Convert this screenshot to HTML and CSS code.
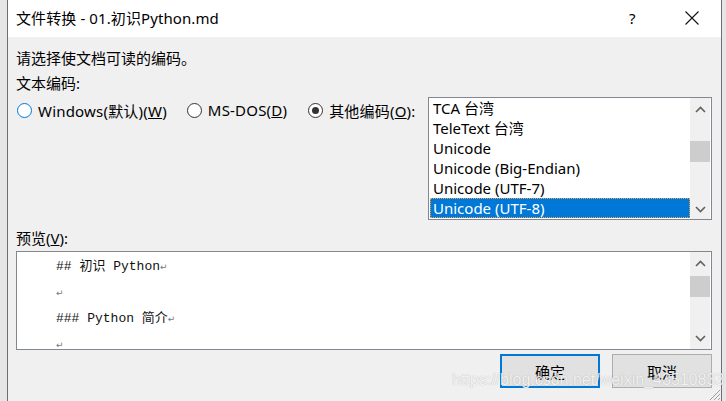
FILE: index.html
```html
<!DOCTYPE html>
<html lang="zh-CN">
<head>
<meta charset="utf-8">
<title>文件转换</title>
<link rel="stylesheet" href="styles.css">
</head>
<body>
<div class="dialog">
  <div class="titlebar">
    <span class="title">文件转换 - 01.初识Python.md</span>
    <span class="help">?</span>
    <svg class="close" width="14" height="14" viewBox="0 0 14 14"><path d="M0.5 0.5 L13.5 13.5 M13.5 0.5 L0.5 13.5" stroke="#111" stroke-width="1.1" fill="none"/></svg>
  </div>
  <div class="content">
    <div class="line">请选择使文档可读的编码。</div>
    <div class="line">文本编码:</div>
    <div class="encrow">
      <div class="radios">
        <label class="radio"><span class="circle focus"></span><span>Windows(默认)(<u>W</u>)</span></label>
        <label class="radio"><span class="circle"></span><span>MS-DOS(<u>D</u>)</span></label>
        <label class="radio"><span class="circle checked"></span><span>其他编码(<u>O</u>):</span></label>
      </div>
      <div class="listbox">
        <ul class="items">
          <li>TCA 台湾</li>
          <li>TeleText 台湾</li>
          <li>Unicode</li>
          <li>Unicode (Big-Endian)</li>
          <li>Unicode (UTF-7)</li>
          <li class="sel">Unicode (UTF-8)</li>
        </ul>
        <div class="vscroll">
          <svg class="arrow" width="11" height="7" viewBox="0 0 11 7"><path d="M1 6 L5.5 1.5 L10 6" stroke="#606060" stroke-width="1.6" fill="none"/></svg>
          <div class="track lb"><div class="thumb lbthumb"></div></div>
          <svg class="arrow" width="11" height="7" viewBox="0 0 11 7"><path d="M1 1 L5.5 5.5 L10 1" stroke="#606060" stroke-width="1.6" fill="none"/></svg>
        </div>
      </div>
    </div>
    <div class="line preview-label">预览(<u>V</u>):</div>
    <div class="preview">
      <div class="ptext">
        <div class="pline">## 初识 Python<span class="ret">↵</span></div>
        <div class="pline"><span class="ret">↵</span></div>
        <div class="pline">### Python 简介<span class="ret">↵</span></div>
        <div class="pline"><span class="ret">↵</span></div>
      </div>
      <div class="vscroll pv">
        <svg class="arrow" width="11" height="7" viewBox="0 0 11 7"><path d="M1 6 L5.5 1.5 L10 6" stroke="#606060" stroke-width="1.6" fill="none"/></svg>
        <div class="track pvtrack"><div class="thumb pvthumb"></div></div>
        <svg class="arrow" width="11" height="7" viewBox="0 0 11 7"><path d="M1 1 L5.5 5.5 L10 1" stroke="#606060" stroke-width="1.6" fill="none"/></svg>
      </div>
    </div>
    <div class="buttons">
      <button class="btn default">确定</button>
      <button class="btn">取消</button>
    </div>
  </div>
  <div class="watermark">https://blog.csdn.net/weixin_43510833</div>
  <svg class="grip" width="14" height="14" viewBox="0 0 14 14"><path d="M13 3 L3 13 M13 7 L7 13 M13 11 L11 13" stroke="#a0a0a0" stroke-width="1" fill="none"/></svg>
</div>
</body>
</html>
```
FILE: styles.css
```css
html, body {
  margin: 0;
  padding: 0;
  height: 100%;
  overflow: hidden;
}
body {
  background: #e6e6e6;
  font-family: "Segoe UI", "Noto Sans", "Noto Sans CJK SC", sans-serif;
  font-size: 15px;
  color: #000;
}
.dialog {
  position: relative;
  margin-left: 7px;
  width: 713px;
  height: 401px;
  border-left: 1px solid #6e6e6e;
  border-right: 1px solid #6e6e6e;
  background: #f0f0f0;
}
.titlebar {
  height: 37px;
  background: #fff;
  display: flex;
  align-items: center;
  padding-left: 8px;
}
.title {
  flex: 1;
  line-height: 20px;
  margin-top: -2px;
  letter-spacing: 0.1px;
}
.help {
  width: 10px;
  font-size: 15px;
  margin-right: 46px;
  margin-top: -2px;
}
.close {
  margin-right: 22px;
  margin-top: -2px;
}
.content {
  padding: 9px 8px 0 8px;
}
.line {
  height: 25px;
  line-height: 25px;
  white-space: nowrap;
}
.encrow {
  display: flex;
  margin-top: 1px;
}
.radios {
  width: 412px;
  display: flex;
  height: 26px;
  align-items: center;
  white-space: nowrap;
}
.radio {
  display: flex;
  align-items: center;
  gap: 6px;
  margin-right: 20px;
  letter-spacing: 0.2px;
}
.radio:first-child { padding-left: 1px; }
.radio:nth-child(2) { margin-right: 21px; }
.circle {
  width: 13px;
  height: 13px;
  border: 1px solid #333;
  border-radius: 50%;
  background: #fff;
  display: flex;
  align-items: center;
  justify-content: center;
}
.circle.focus { border-color: #0078d7; }
.circle.checked::after {
  content: "";
  width: 7px;
  height: 7px;
  border-radius: 50%;
  background: #333;
}
.listbox {
  width: 282px;
  height: 121px;
  border: 1px solid #828790;
  background: #fff;
  display: flex;
  margin-left: 0;
}
.items {
  list-style: none;
  margin: 0;
  padding: 0 0 0 1px;
  flex: 1;
}
.items li {
  height: 20px;
  line-height: 21px;
  padding-left: 3px;
  white-space: nowrap;
}
.items li.sel {
  background: #0078d7;
  color: #fff;
  outline: 1px dotted #f3a04a;
  outline-offset: -1px;
}
.vscroll {
  width: 20px;
  background: #f0f0f0;
  display: flex;
  flex-direction: column;
  align-items: center;
  padding: 8px 0 6px;
  box-sizing: border-box;
  margin-right: 1px;
}
.arrow { flex: none; }
.track {
  flex: 1;
  width: 20px;
  position: relative;
}
.thumb {
  position: absolute;
  left: 0;
  width: 20px;
  background: #cdcdcd;
}
.lbthumb { top: 28px; height: 21px; }
.preview-label {
  margin-top: 6px;
}
.preview {
  height: 97px;
  border: 1px solid #828790;
  background: #fff;
  display: flex;
  width: 694px;
}
.ptext {
  flex: 1;
  padding: 4px 0 0 39px;
  font-family: "Liberation Mono", "Noto Sans CJK SC", monospace;
  font-size: 13px;
  color: #111;
  overflow: hidden;
}
.pline {
  height: 26px;
  line-height: 22px;
  white-space: pre;
}
.ret {
  font-family: "DejaVu Sans", sans-serif;
  font-size: 9px;
  color: #777;
}
.pv { padding-top: 8px; padding-bottom: 7px; }
.pvthumb { top: 9px; height: 21px; }
.buttons {
  display: flex;
  justify-content: flex-end;
  gap: 12px;
  margin-top: 4px;
  padding-right: 1px;
}
.btn {
  width: 100px;
  height: 34px;
  background: #e1e1e1;
  border: 1px solid #adadad;
  font-family: "Noto Sans CJK SC", sans-serif;
  font-size: 15px;
  color: #000;
  padding: 0;
  margin: 0;
}
.btn.default {
  border: 2px solid #0078d7;
}
.watermark {
  position: absolute;
  left: 444px;
  top: 371px;
  font-family: "Liberation Sans", Arial, sans-serif;
  font-size: 16px;
  color: rgba(255, 255, 255, 0.85);
  text-shadow: 0 0 1px rgba(120, 120, 120, 0.6);
  white-space: nowrap;
  pointer-events: none;
}
.grip {
  position: absolute;
  right: 0;
  bottom: 0;
}
```
